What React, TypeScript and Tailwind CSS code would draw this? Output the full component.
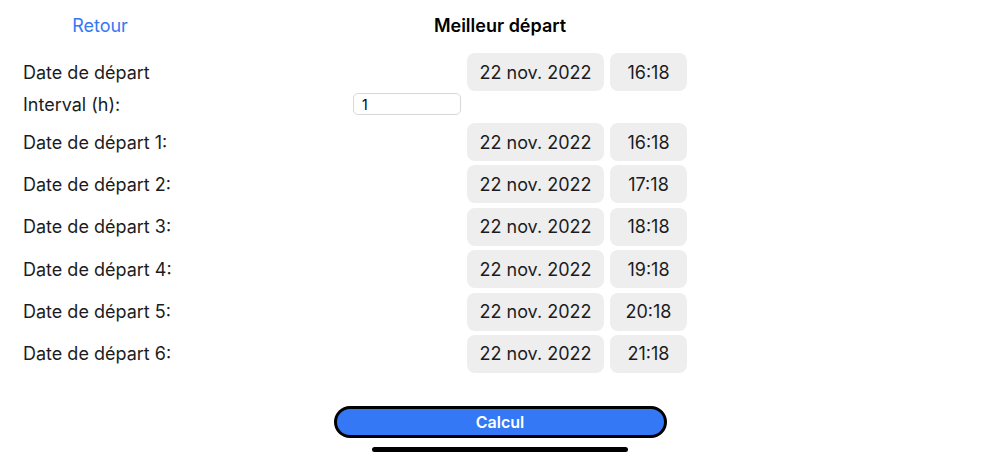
import React from "react";

const rows = ["16:18", "17:18", "18:18", "19:18", "20:18", "21:18"];

const Pill = ({ children, w }: { children: React.ReactNode; w: string }) => (
  <div
    className={`${w} h-[38px] rounded-lg bg-[#eeeeef] flex items-center justify-center text-[18px] text-[#1c1c1e]`}
  >
    {children}
  </div>
);

const App = () => {
  return (
    <div
      className="w-[1000px] h-[462px] bg-white overflow-hidden flex flex-col"
      style={{ fontFamily: "Inter, 'Liberation Sans', sans-serif" }}
    >
      <div className="h-[50px] flex items-center relative">
        <div className="w-[200px] text-center text-[18px] text-[#3478f6]">Retour</div>
        <div className="absolute left-0 right-0 text-center text-[18px] font-semibold text-black pointer-events-none">
          Meilleur départ
        </div>
      </div>

      <div className="w-[687px] pl-[23px] flex flex-col text-[18px] text-[#1c1c1e]">
        <div className="h-[41px] pt-[3px] flex items-center">
          <div className="flex-1">Date de départ</div>
          <div className="flex gap-[6px]">
            <Pill w="w-[137px]">22 nov. 2022</Pill>
            <Pill w="w-[77px]">16:18</Pill>
          </div>
        </div>
        <div className="h-[26px] flex items-center">
          <div className="flex-1">Interval (h):</div>
          <input
            defaultValue="1"
            className="w-[108px] h-[22px] mr-[226px] rounded-[5px] border border-[#d8d8da] px-2 text-[14px] text-black outline-none"
          />
        </div>
        <div className="flex flex-col gap-[4.4px] mt-[6px]">
          {rows.map((t, i) => (
            <div key={i} className="flex items-center">
              <div className="flex-1">Date de départ {i + 1}:</div>
              <div className="flex gap-[6px]">
                <Pill w="w-[137px]">22 nov. 2022</Pill>
                <Pill w="w-[77px]">{t}</Pill>
              </div>
            </div>
          ))}
        </div>
      </div>

      <div className="mt-auto flex flex-col items-center pb-[10px]">
        <button className="w-[333px] h-[32px] rounded-full border-[3px] border-black bg-[#3478f6] text-white text-[16px] font-semibold flex items-center justify-center">
          Calcul
        </button>
        <div className="mt-[9px] w-[256px] h-[5px] rounded-full bg-black" />
      </div>
    </div>
  );
};

export default App;
